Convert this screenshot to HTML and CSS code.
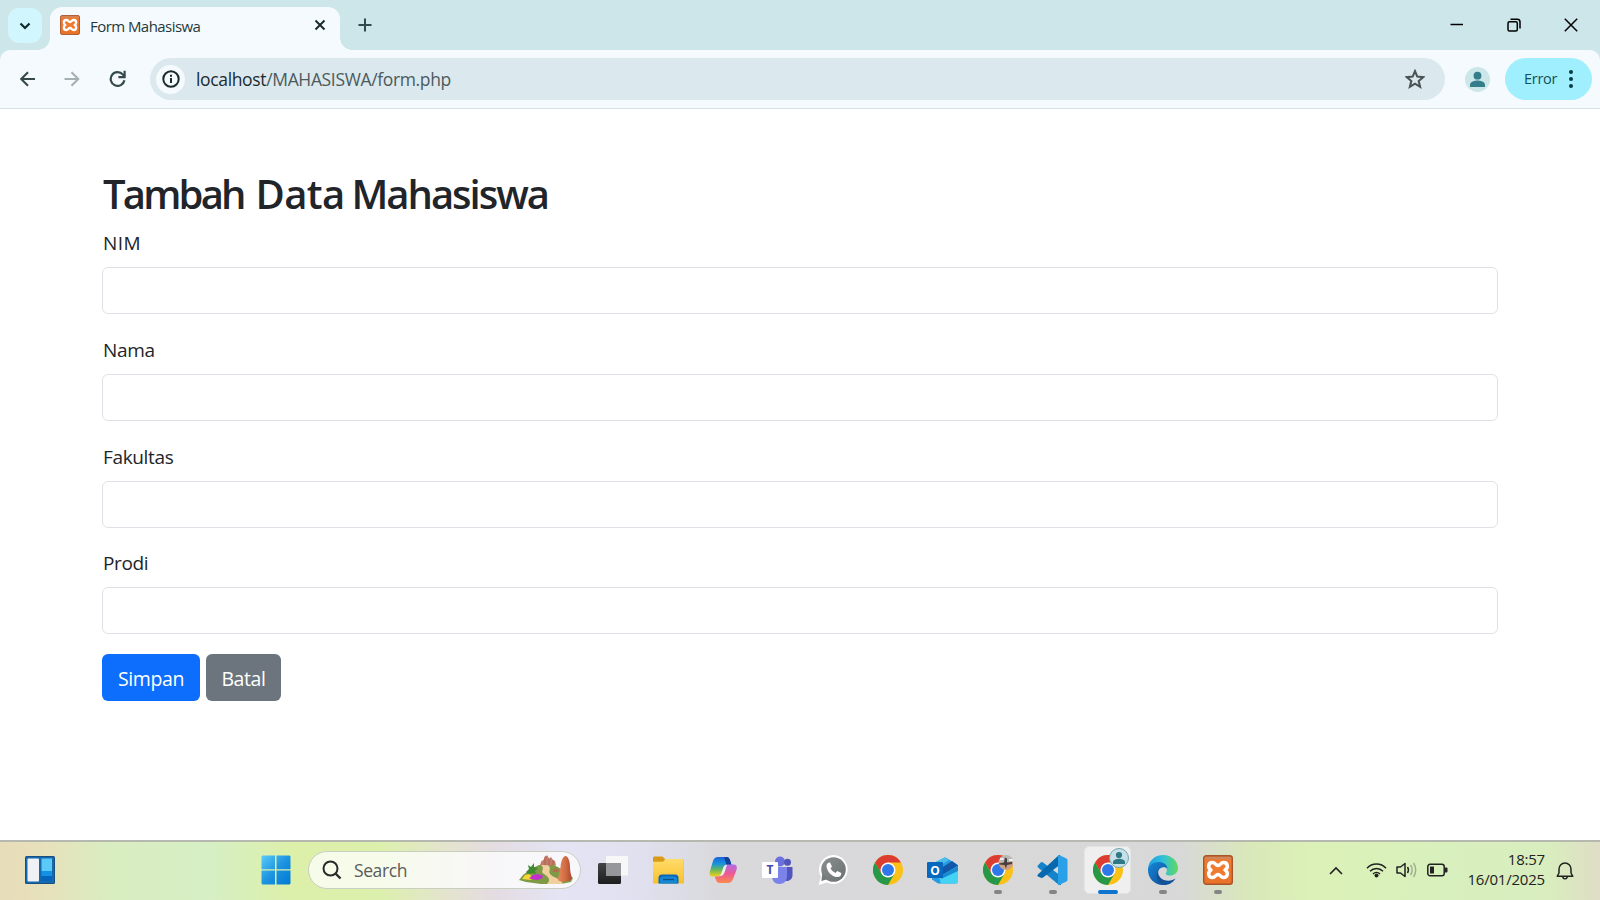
FILE: index.html
```html
<!DOCTYPE html>
<html lang="id">
<head>
<meta charset="utf-8">
<title>Form Mahasiswa</title>
<link rel="stylesheet" href="styles.css">
</head>
<body>
<svg class="defs" width="0" height="0">
  <defs>
    <linearGradient id="winpane" x1="0" y1="0" x2="30" y2="30" gradientUnits="userSpaceOnUse"><stop offset="0" stop-color="#5ccdf8"/><stop offset=".5" stop-color="#1c94e0"/><stop offset="1" stop-color="#0078d4"/></linearGradient>
    <linearGradient id="folder" x1="0" y1="0" x2="0" y2="1"><stop offset="0" stop-color="#ffdc6b"/><stop offset="1" stop-color="#f9c02c"/></linearGradient>
    <linearGradient id="copA" x1="0" y1="0" x2="0" y2="1"><stop offset="0" stop-color="#1c63d8"/><stop offset=".35" stop-color="#1792dd"/><stop offset=".65" stop-color="#67b85a"/><stop offset="1" stop-color="#f4cf1d"/></linearGradient>
    <linearGradient id="copB" x1="0" y1="0" x2="0" y2="1"><stop offset="0" stop-color="#b16be8"/><stop offset=".5" stop-color="#ee5a93"/><stop offset="1" stop-color="#fb8a4c"/></linearGradient>
    <linearGradient id="wa" x1="0" y1="0" x2="1" y2="1"><stop offset="0" stop-color="#8a908f"/><stop offset="1" stop-color="#6b7170"/></linearGradient>
    <linearGradient id="edgeA" x1="0" y1=".3" x2="1" y2=".3"><stop offset="0" stop-color="#1b9de2"/><stop offset=".5" stop-color="#2fc0dc"/><stop offset="1" stop-color="#62da5b"/></linearGradient>
    <linearGradient id="edgeB" x1="0" y1="0" x2="1" y2="1"><stop offset="0" stop-color="#1487d4"/><stop offset="1" stop-color="#124a98"/></linearGradient>
    <linearGradient id="orange" x1="0" y1="0" x2="0" y2="1"><stop offset="0" stop-color="#d97a3e"/><stop offset=".2" stop-color="#ef7a30"/><stop offset="1" stop-color="#e8722a"/></linearGradient>
    <linearGradient id="black" x1="0" y1="0" x2="0" y2="1"><stop offset="0" stop-color="#444"/><stop offset="1" stop-color="#1d1d1d"/></linearGradient>
    <linearGradient id="rock" x1="0" y1="0" x2="1" y2="0"><stop offset="0" stop-color="#e38a5c"/><stop offset=".6" stop-color="#cf6840"/><stop offset="1" stop-color="#a84a30"/></linearGradient>
    <symbol id="chrome" viewBox="0 0 30 30">
      <circle cx="15" cy="15" r="15" fill="#fbc116"/>
      <path d="M15 15 8.5 18.75 2 7.5A15 15 0 0 1 28 7.5H15Z" fill="#dd3d31"/>
      <path d="M2 7.5A15 15 0 0 0 15 30L21.5 18.75 15 15 8.5 18.75Z" fill="#279847"/>
      <circle cx="15" cy="15" r="7.5" fill="#fff"/><circle cx="15" cy="15" r="6" fill="#2f78ea"/>
    </symbol>
    <symbol id="xampp" viewBox="0 0 30 30">
      <rect x=".7" y=".7" width="28.6" height="28.6" rx="2.5" fill="url(#orange)" stroke="#a9552a" stroke-width="1.4"/>
      <path d="M2 3h26" stroke="#c98d67" stroke-width="1.5"/>
      <path d="M9.500 7.500C5 7.500 4.500 13 8 15C4.500 17 5 22.500 9.500 22.500C12.500 22.500 12.500 19.500 15 19.500S17.500 22.500 20.500 22.500C25 22.500 25.500 17 22 15C25.500 13 25 7.500 20.500 7.500C17.500 7.500 17.500 10.500 15 10.500S12.500 7.500 9.500 7.500Z" fill="#ef7a30" stroke="#fff" stroke-width="3.500" stroke-linejoin="round"/>
    </symbol>
  </defs>
</svg>

<header class="browser">
  <div class="tabstrip">
    <button class="tabsearch"><svg width="12" height="8" viewBox="0 0 12 8"><path d="M1.500 1.500 6 6l4.500-4.500" fill="none" stroke="#10282b" stroke-width="2.200"/></svg></button>
    <div class="tab">
      <svg class="favicon" width="20" height="20"><use href="#xampp"/></svg>
      <span class="tabtitle">Form Mahasiswa</span>
      <svg width="12" height="12" viewBox="0 0 12 12"><path d="m1.500 1.500 9 9m0-9-9 9" stroke="#1b2b2e" stroke-width="2"/></svg>
    </div>
    <svg class="newtab" width="14" height="14" viewBox="0 0 14 14"><path d="M7 .500v13M.500 7h13" stroke="#33494c" stroke-width="2"/></svg>
    <div class="wincontrols">
      <svg width="14" height="14" viewBox="0 0 14 14"><path d="M.500 6.500h12.500" stroke="#000" stroke-width="1.500"/></svg>
      <svg width="14" height="14" viewBox="0 0 14 14"><g fill="none" stroke="#000" stroke-width="1.500"><rect x="1" y="3.700" width="9.300" height="9.300" rx="1.500"/><path d="M3.500 1.200h6.800a2.700 2.700 0 0 1 2.700 2.700v6.600"/></g></svg>
      <svg width="14" height="14" viewBox="0 0 14 14"><path d="m.800.800 12.400 12.400m0-12.400L.800 13.200" stroke="#000" stroke-width="1.500"/></svg>
    </div>
  </div>
  <div class="toolbar">
    <svg width="16" height="16" viewBox="0 0 16 16"><path d="M15 8H1.500M8 1.200 1.200 8 8 14.800" fill="none" stroke="#35494b" stroke-width="2.100"/></svg>
    <svg width="16" height="16" viewBox="0 0 16 16"><path d="M.500 8H14M7.500 1.200 14.300 8l-6.800 6.800" fill="none" stroke="#a5afb1" stroke-width="2"/></svg>
    <svg width="18" height="18" viewBox="0 0 18 18"><path d="M15.400 10.300A6.900 6.900 0 1 1 13.900 4.600l1.800 2" fill="none" stroke="#35494b" stroke-width="2.200"/><path d="M15.600.800v6.400H9.400" fill="none" stroke="#35494b" stroke-width="2.200"/></svg>
    <div class="omnibox">
      <span class="siteinfo"><svg width="18" height="18" viewBox="0 0 18 18"><circle cx="9" cy="9" r="7.700" fill="none" stroke="#1c2b2d" stroke-width="2"/><path d="M9 8v5M9 4.800v2" stroke="#1c2b2d" stroke-width="2"/></svg></span>
      <span class="url"><b>localhost</b>/MAHASISWA/form.php</span>
      <svg width="20" height="20" viewBox="0 0 20 20"><path d="m10 2.200 2.300 5.400 5.900.500-4.500 3.900 1.400 5.800-5.100-3.100-5.100 3.100 1.400-5.800-4.500-3.900 5.900-.500Z" fill="none" stroke="#4a5456" stroke-width="2.100"/></svg>
    </div>
    <svg class="avatar" width="25" height="25" viewBox="0 0 25 25"><circle cx="12.500" cy="12.500" r="12.500" fill="#cde6ea"/><circle cx="12.500" cy="8.700" r="3.900" fill="#347d8b"/><path d="M5 20v-2.200c0-3.200 5-4.400 7.500-4.400s7.500 1.200 7.500 4.400V20Z" fill="#347d8b"/></svg>
    <button class="error"><span>Error</span><svg width="4" height="18" viewBox="0 0 4 18"><g fill="#0c3a42"><circle cx="2" cy="2" r="2"/><circle cx="2" cy="9" r="2"/><circle cx="2" cy="16" r="2"/></g></svg></button>
  </div>
</header>

<main class="container">
  <h2 class="heading"><span class="tight">Tambah</span> Data <span class="snug">Mahasiswa</span></h2>
  <form>
    <div class="field"><label class="label nim" for="nim">NIM</label><input id="nim" class="control"></div>
    <div class="field"><label class="label" for="nama">Nama</label><input id="nama" class="control"></div>
    <div class="field"><label class="label" for="fakultas">Fakultas</label><input id="fakultas" class="control"></div>
    <div class="field"><label class="label" for="prodi">Prodi</label><input id="prodi" class="control"></div>
    <div class="actions"><button type="button" class="btn primary">Simpan</button><button type="button" class="btn secondary">Batal</button></div>
  </form>
</main>

<footer class="taskbar">
  <svg class="widgets" width="30" height="28" viewBox="0 0 30 28"><rect width="30" height="28" rx="1.500" fill="#174f83"/><rect x="1" y="1" width="28" height="26" fill="#1769ad"/><rect x="2.500" y="2.500" width="11.500" height="23" rx="1" fill="#f0f1f5"/><path d="M16.500 2.500h10.500V15H16.500z" fill="#5bcaf8"/><path d="M16.500 15h10.500v5H16.500z" fill="#1490e5"/><path d="M16.500 20h10.500v5H16.500z" fill="#0565bd"/></svg>
  <div class="apps">
    <div class="app"><svg width="30" height="30" viewBox="0 0 30 30"><g fill="url(#winpane)"><path d="M1.500.500H14v13.700H.500V1.500Zm14 0h13l1 1v12.700h-14ZM.500 15.500H14v14H1.500l-1-1Zm15 0h14v13l-1 1h-13Z"/></g></svg></div>
    <div class="search">
      <svg width="20" height="20" viewBox="0 0 20 20"><circle cx="8.500" cy="8.500" r="7" fill="none" stroke="#2a2a2a" stroke-width="2"/><path d="m13.500 13.500 5 5" stroke="#2a2a2a" stroke-width="2.400"/></svg>
      <span>Search</span>
      <svg class="scene" width="56" height="30" viewBox="0 0 56 30">
        <path d="M1 25 5 20 13 14 21 10h15l13 7 6 6-2 4-10 2H23L8 27Z" fill="#7f9a45"/>
        <path d="M23 10c5 4-2 6 3 9 5 3 7 6 3 10h16c-1-5-11-7-13-10-2-4 2-5-2-9Z" fill="#f1d0a0"/>
        <path d="M22 10l1.500-4 2-1 1.500-4 2.500-.500 1.500 3 2-1.500 2 3 2 1 1 4.500Z" fill="#c57a68"/>
        <path d="M27 2v8M31 4v6M35 5v5" stroke="#a65e50" stroke-width=".800"/>
        <path d="M34 17l2-3 3-1 2 4Z" fill="#b9694c"/>
        <path d="M40 25c0-4 2-8 2.500-13 .500-6 2.500-11 5-11s4.500 5 4.500 11 2 9 1.500 12c-2 3-11 4-13.500 1Z" fill="url(#rock)"/>
        <path d="M8 17l3-3-1-4 3 2 3-4v4l4 1-3 3 1 3-4-1-4 2-1-2Z" fill="#3f8b30"/>
        <path d="M4 24l3-4 4-1 4 3-2 3Z" fill="#f5d733"/>
        <path d="M11 23.500l3-3 5-1.500 6 1.500-1 3-5 1.500Z" fill="#c22fd0"/>
      </svg>
    </div>
    <div class="app"><svg width="30" height="30" viewBox="0 0 30 30"><rect x="0" y="8" width="23" height="21" rx="1.500" fill="url(#black)"/><path d="M8 1h21.500q1 0 1 1v18.500H8Z" fill="#f7f7f8"/><path d="M8 8h15v12.500H8Z" fill="#96979b"/></svg></div>
    <div class="app"><svg width="32" height="30" viewBox="0 0 32 30"><path d="M1 3q0-1.500 1.500-1.500h8L13 4h17q1.500 0 1.500 1.500V28H1Z" fill="#d99a17"/><path d="M1 6.800h10L13.500 4H30q1.500 0 1.500 1.500V28.500H1Z" fill="url(#folder)"/><path d="M6.500 28.500V23q0-3.500 3.500-3.500h13q3.500 0 3.500 3.500v5.500Z" fill="#0865b8"/><path d="M8 28.500v-4q0-3 3-3h11q3 0 3 3v4Z" fill="#1587d4"/><path d="M11 24.500h11" stroke="#0d4f8b" stroke-width="1.300"/></svg></div>
    <div class="app"><svg width="30" height="30" viewBox="0 0 30 30"><path d="M10 2h8.500q2.500 0 3.500 3l1.500 5h-4q-2.500 0-3.500 3l-2 6q-1 2.500-3.500 2.500H4.500Q.500 21.500 2 16L5 6q1.200-4 5-4Z" fill="url(#copA)"/><path d="M16 2h3q2 0 3 3l1.500 5h-5Z" fill="#123e9d"/><path d="M20 28h-8.500q-2.500 0-3.500-3l-1.300-3.500H10q3 0 4-3l2-6Q17 9.500 20 9.500h5.500Q30 9.500 28.500 15L25 24q-1.500 4-5 4Z" fill="url(#copB)"/><path d="m13 19 2.500-7q1-2.500 3.500-2.500l-2.500 8q-1 3-3.500 3.500H11q1.500-.500 2-2Z" fill="#eee"/></svg></div>
    <div class="app"><svg width="31" height="30" viewBox="0 0 31 30"><circle cx="18" cy="6.500" r="5" fill="#6b70dc"/><circle cx="25.500" cy="7.300" r="3.500" fill="#5056bb"/><path d="M21 12h9.500v8c0 4-3 6-6.500 6h-3Z" fill="#5056bb"/><path d="M10 12h15v9c0 5-3 8-7.500 8S10 26 10 21Z" fill="#7b83eb"/><rect y="7" width="16" height="16" rx="1" fill="#fff"/><text x="8" y="19.300" text-anchor="middle" class="letter" fill="#4549aa">T</text></svg></div>
    <div class="app"><svg width="30" height="30" viewBox="0 0 30 30"><path d="M15.500 0A14.500 14.500 0 1 1 8.700 27.500L.500 30 2.900 21.700A14.500 14.500 0 0 1 15.500 0Z" fill="#fff"/><circle cx="15.500" cy="14.500" r="12.300" fill="url(#wa)"/><path d="m4.500 18-1.200 8 7-2Z" fill="#747b79"/><path d="m10 8 2-.500 2 4-1.500 2q1.700 3.300 5 4.500l1.800-2 4 2-.500 2.500q-1 1.500-4 1.500C14 22 8.500 16 8.500 11q0-2 1.500-3Z" fill="#fff"/></svg></div>
    <div class="app"><svg width="30" height="30"><use href="#chrome"/></svg></div>
    <div class="app"><svg width="31" height="30" viewBox="0 0 31 30"><path d="M5 9 16.500 3q1.500-.800 3 0L31 10v17l-2 1.500H11l-6-4Z" fill="#269be1"/><path d="M5 9 16.500 3q1.500-.800 3 0L22 5 8 14Z" fill="#48bdea"/><path d="m13 14 12-8 6 4.500-15 9.500Z" fill="#1357aa"/><path d="m12 22 19-11v15.500q0 2-2 2H14Z" fill="#43d3f5"/><path d="m16 19.500 15-8.500v5L14 24Z" fill="#188bd0"/><rect y="7" width="16" height="16" rx="1" fill="#0768bd"/><text x="8" y="19.500" text-anchor="middle" class="letter" fill="#fff">O</text></svg></div>
    <div class="app run"><svg width="30" height="30" viewBox="0 0 30 30"><use href="#chrome" width="30" height="30"/><clipPath id="photo"><circle cx="23" cy="7.500" r="7.500"/></clipPath><g clip-path="url(#photo)"><path d="M15 0h16v7H15z" fill="#b9b6b4"/><path d="M15 7h16v9H15z" fill="#cda084"/><path d="M16 8.500l5-1 1-5 2 1v4l5-.500v2l-5 1-1 3.500-1.500-3.500-5.500-.500Z" fill="#45403f"/><path d="M17 3h3.500v2H17zM26 4h4v2h-4z" fill="#eee"/></g></svg></div>
    <div class="app run"><svg width="31" height="30" viewBox="0 0 31 30"><path d="M.800 10.500 4 7.300q1-.600 2 .200L24 21v9h-2L1 12.500q-1-1-.200-2Z" fill="#1583ca"/><path d="M.800 19.500 22 0l2 1v8L6 22.500q-1 .800-2 .200L.800 21.500q-.800-1 0-2Z" fill="#0868ad"/><path d="m22 0 7.500 3.500q1 .500 1 2v19q0 1.500-1 2L22 30q-1 .300-1-1V1q0-1 1-1Z" fill="#29a0e8"/></svg></div>
    <div class="app active"><svg width="30" height="30"><use href="#chrome"/></svg><svg class="badge" width="20" height="20" viewBox="0 0 20 20"><circle cx="10" cy="10" r="9.500" fill="#c5e0e6" stroke="#75a4ae"/><circle cx="10" cy="7" r="3.100" fill="#2f7886"/><path d="M4 16v-2c0-2.500 4-3.300 6-3.300s6 .800 6 3.300v2Z" fill="#2f7886"/></svg></div>
    <div class="app run"><svg width="30" height="30" viewBox="0 0 30 30"><path d="M0 15C0 6 7 0 15 0c9 0 15 6.500 15 13 0 5-4 7.500-8 7.500-3.500 0-5-1.300-3.700-3C20 15 18 10 12 10 6 10 0 13 0 18Z" fill="url(#edgeA)"/><path d="M0 15c0-3 4-8 11-8 6 0 8.500 4 8.500 7 0-3-10-3-10 5 0 6 6 10 12 9a15 15 0 0 1-6.500 2C6 30 0 23 0 15Z" fill="url(#edgeB)"/><path d="M13 12c-5 3-3 11 3 13 5 1.700 9 0 11.500-1.500C25 28 20 30 16.500 30 8 30 6 16 13 12Z" fill="#135198"/></svg></div>
    <div class="app run"><svg width="30" height="30"><use href="#xampp"/></svg></div>
  </div>
  <div class="tray">
    <svg width="14" height="9" viewBox="0 0 14 9"><path d="m1 8 6-6 6 6" fill="none" stroke="#222" stroke-width="1.600"/></svg>
    <svg class="wifi" width="21" height="16" viewBox="0 0 21 16"><g fill="none" stroke="#222" stroke-width="1.500"><path d="M1 6.200a13 13 0 0 1 19 0M4 9.200a9 9 0 0 1 13 0M7 12a5 5 0 0 1 7 0"/></g><circle cx="10.500" cy="13.500" r="2" fill="#222"/></svg>
    <svg class="sound" width="21" height="16" viewBox="0 0 21 16"><path d="M1 5h3.500L9 1.500v13L4.500 11H1Z" fill="none" stroke="#222" stroke-width="1.500" stroke-linejoin="round"/><path d="M11.500 5q2 3 0 6" fill="none" stroke="#222" stroke-width="1.400"/><path d="M14.500 3q3.500 5 0 10M17.500 1q4.500 7 0 14" fill="none" stroke="#9eae8c" stroke-width="1.400"/></svg>
    <svg class="battery" width="21" height="14" viewBox="0 0 21 14"><rect x=".800" y="1.300" width="16.400" height="11.400" rx="2.300" fill="none" stroke="#222" stroke-width="1.500"/><rect x="3" y="3.500" width="4" height="7" rx=".500" fill="#222"/><path d="M18 4.500h1.500q1 0 1 1v3q0 1-1 1H18Z" fill="#222"/></svg>
    <div class="clock"><div class="time">18:57</div><div class="date">16/01/2025</div></div>
    <svg class="bell" width="18" height="19" viewBox="0 0 18 19"><path d="M3 8a6 6 0 0 1 12 0v4l1.800 3.300H1.200L3 12Z" fill="none" stroke="#222" stroke-width="1.500" stroke-linejoin="round"/><path d="M6.500 16q2.500 3.800 5 0" fill="none" stroke="#222" stroke-width="1.400"/></svg>
  </div>
</footer>
</body>
</html>
```
FILE: styles.css
```css
* { box-sizing: border-box; }
html, body { height: 100%; }
body { margin: 0; display: flex; flex-direction: column; overflow: hidden; background: #fff; color: #212529; font-family: "Open Sans", "Noto Sans", sans-serif; }
button { border: 0; padding: 0; font: inherit; }
svg { flex: none; display: block; }
.defs { position: absolute; }

.browser { flex: none; height: 109px; background: #cde6ea; }
.tabstrip { height: 50px; display: flex; align-items: flex-start; padding-left: 8px; }
.tabsearch { width: 34px; height: 35px; margin: 8px 8px 0 0; border-radius: 11px; background: #d2f6fe; display: grid; place-items: center; }
.tab { position: relative; width: 290px; height: 43px; margin-top: 7px; padding: 0 14px 7px 10px; display: flex; align-items: center; border-radius: 12px 12px 0 0; background: #f4fafd; }
.tab::before, .tab::after { content: ""; position: absolute; bottom: 0; width: 12px; height: 12px; }
.tab::before { left: -12px; background: radial-gradient(circle at 0 0, transparent 11.5px, #f4fafd 12px); }
.tab::after { right: -12px; background: radial-gradient(circle at 100% 0, transparent 11.5px, #f4fafd 12px); }
.tabtitle { flex: 1; margin-left: 10px; padding-top: 1px; font-size: 15px; letter-spacing: -0.55px; color: #27383b; }
.newtab { margin: 18px 0 0 18px; }
.wincontrols { margin: 18px 22px 0 auto; display: flex; gap: 43px; }

.toolbar { height: 59px; display: flex; align-items: center; padding: 0 8px 0 20px; background: #f4fafd; border-radius: 10px 10px 0 0; border-bottom: 1px solid #d8e1e4; }
.toolbar > svg { margin-right: 28px; }
.toolbar > svg:nth-child(3) { margin-right: 23px; margin-left: 1px; }
.omnibox { flex: 1; height: 42px; display: flex; align-items: center; padding: 0 20px 0 6px; border-radius: 21px; background: #dbe9ee; }
.siteinfo { width: 29px; height: 29px; border-radius: 50%; background: #f4fafd; display: grid; place-items: center; }
.url { flex: 1; margin-left: 11px; padding-bottom: 1px; font-size: 17.5px; letter-spacing: -0.35px; color: #4b5a5d; }
.url b { font-weight: 400; color: #1b2b2e; }
.toolbar > .avatar { margin: 0 15px 0 20px; }
.error { width: 87px; height: 42px; border-radius: 21px; background: #9feffe; color: #174e57; font-size: 14.5px; display: flex; align-items: center; justify-content: space-between; padding: 0 19px; letter-spacing: -0.3px; }
.error span { padding-bottom: 1px; }

.container { flex: 1; padding: 60px 102px 0; }
.heading { margin: 0 0 10px; padding: 1px 0 0 1px; height: 48px; font-size: 40px; line-height: 48px; font-weight: 600; letter-spacing: -0.6px; }
.tight { letter-spacing: -2.8px; margin-right: 2px; }
.snug { letter-spacing: -2px; margin-left: -3px; }
.field { height: 87px; margin-bottom: 20px; }
.field:nth-of-type(4) { margin-top: -1px; }
.label { display: block; height: 30px; margin-bottom: 10px; padding-left: 1px; line-height: 32px; font-size: 19px; letter-spacing: -0.35px; }
.nim { letter-spacing: 0.4px; }
.control { display: block; width: 100%; height: 47px; border: 1px solid #dee2e6; border-radius: 6px; background: #fff; }
.actions { display: flex; gap: 6px; }
.btn { height: 47px; border-radius: 6px; color: #fff; font-size: 19.5px; letter-spacing: -0.4px; text-align: center; padding-top: 2px; }
.primary { width: 98px; background: #0d6efd; }
.secondary { width: 75px; background: #6c757d; }

.taskbar { flex: none; height: 60px; display: flex; align-items: center; padding: 0 0 2px 25px; border-top: 2px solid #b5b9b0; background: linear-gradient(90deg, #e8dcb9 0, #e6e2bb 50px, #d9edc1 110px, #d6efc4 210px, #dcf0aa 290px, #dcf0ad 380px, #e4e3cf 450px, #e4dce2 495px, #e4e4f4 560px, #e0e0ef 640px, #d9d9dc 720px, #d8d8d8 1180px, #d9e8b9 1250px, #dbf1b7 1310px, #d8f0bd 1450px, #d9edbe 1550px, #dfddc6 1600px); }
.apps { display: flex; align-items: center; margin-left: 193px; height: 100%; }
.app { position: relative; width: 55px; height: 48px; display: grid; place-items: center; }
.search { width: 273px; height: 38px; margin: 0 4px 0 5px; padding: 0 6px 0 13px; display: flex; align-items: center; border-radius: 19px; border: 1px solid #c9cfc0; background: rgba(255,255,255,.75); font-size: 17.5px; letter-spacing: -0.4px; color: #5b5b5b; }
.search span { flex: 1; margin-left: 12px; }
.run::after, .active::after { content: ""; position: absolute; bottom: 0; left: 24px; width: 8px; height: 4px; border-radius: 2px; background: #858585; }
.active::before { content: ""; position: absolute; inset: 0 4px; border-radius: 5px; background: #efefef; border: 1px solid #e4e4e4; }
.active svg { position: relative; }
.active .badge { position: absolute; left: 29px; top: 2px; }
.active::after { left: 18px; width: 20px; background: #0d74cf; }
.letter { font: 700 12px "Open Sans", sans-serif; }
.tray { margin-left: auto; padding-right: 26px; display: flex; align-items: center; color: #222; }
.wifi { margin-left: 23px; }
.sound { margin-left: 9px; }
.battery { margin-left: 10px; }
.clock { margin: 0 11px 0 19px; padding-bottom: 2px; font-size: 15px; line-height: 20px; letter-spacing: -0.2px; text-align: right; }
```
